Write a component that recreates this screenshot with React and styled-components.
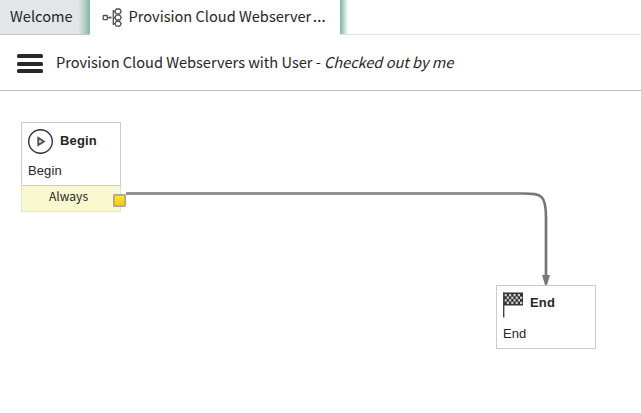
import React from "react";
import styled, { createGlobalStyle } from "styled-components";

const GlobalStyle = createGlobalStyle`
  * { box-sizing: border-box; }
  body { margin: 0; background: #fff; overflow: hidden; }
`;

const Page = styled.div`
  display: flex;
  flex-direction: column;
  width: 641px;
  height: 413px;
  background: #fff;
  color: #262626;
  font-family: "Noto Sans CJK SC", "Noto Sans", sans-serif;
`;

const TabBar = styled.div`
  display: flex;
  height: 35px;
  flex: none;
`;

const Tab = styled.div`
  display: flex;
  align-items: center;
  width: ${(p) => p.$width}px;
  padding: 0 0 2px ${(p) => p.$inset}px;
  border-bottom: 1px solid ${(p) => (p.$active ? "transparent" : "#c3c7c9")};
  background: ${(p) =>
    p.$active
      ? "#fff"
      : "linear-gradient(to right, #e2e6e8 78px, #b5d3c9 84px, #80b6a3 90px)"};
  white-space: nowrap;
`;

const TabLabel = styled.span`
  font-size: 14.6px;
  line-height: 22px;
`;

const Ellipsis = styled.span`
  margin-left: 1.5px;
  font-family: "Noto Sans", sans-serif;
  font-size: 16.5px;
  line-height: 1;
`;

const TabSpace = styled.div`
  flex: 1;
  border-bottom: 1px solid #dfe3e2;
  background: linear-gradient(to right, #80b6a3 0, #a9cfc2 3px, #eef6f3 7px, #fff 10px);
`;

const WorkflowIcon = styled.svg`
  width: 20px;
  height: 19px;
  margin: 3px 7px 0 0;
  flex: none;
`;

const Header = styled.header`
  display: flex;
  align-items: center;
  height: 56px;
  flex: none;
  padding-left: 17px;
  border-bottom: 1px solid #bdbdbd;
`;

const MenuButton = styled.button`
  display: flex;
  flex-direction: column;
  gap: 3px;
  width: 26px;
  margin: 2px 13px 0 0;
  padding: 0;
  border: 0;
  background: none;
`;

const MenuBar = styled.span`
  height: 4px;
  border-radius: 1.5px;
  background: #292929;

  &:not(:first-child) { margin-top: 0.5px; }
`;

const Title = styled.h1`
  margin: 0 0 2px;
  font-size: 14.6px;
  font-weight: 400;
  line-height: 22px;
  letter-spacing: -0.02px;
  white-space: nowrap;
`;

const Status = styled.em`
  font-style: italic;
`;

const Canvas = styled.main`
  position: relative;
  flex: 1;
`;

const Connector = styled.svg`
  position: absolute;
  left: 0;
  top: 0;
`;

const Node = styled.section`
  position: absolute;
  left: ${(p) => p.$x}px;
  top: ${(p) => p.$y}px;
  width: 100px;
  font-family: "Liberation Sans", Arial, sans-serif;
`;

const NodeBody = styled.div`
  height: 64px;
  padding: 6px;
  border: 1px solid #cbcbcb;
  background: #fff;
`;

const NodeHeading = styled.div`
  display: flex;
  align-items: center;
  height: 25px;
  gap: 7px;
`;

const NodeName = styled.strong`
  font-size: 13px;
  line-height: 16px;
  padding-bottom: ${(p) => p.$lift}px;
  letter-spacing: 0.15px;
`;

const NodeText = styled.div`
  margin-top: 9px;
  font-size: 13px;
  line-height: 16px;
  letter-spacing: 0.1px;
`;

const NodeIcon = styled.svg`
  width: ${(p) => p.$width}px;
  height: 26px;
  flex: none;
`;

const Exit = styled.div`
  height: 27px;
  margin-top: -1px;
  padding-right: 5px;
  border: 1px solid #e5e4c7;
  border-top-color: #cbcbcb;
  background: #f9f8cf;
  font: 12.1px/20px "Noto Sans CJK SC", "Noto Sans", sans-serif;
  text-align: center;
`;

const Port = styled.span`
  position: absolute;
  left: 92px;
  top: 72px;
  width: 13px;
  height: 13px;
  border: 1px solid #aaa593;
  border-radius: 1px;
  box-shadow: inset 0 0 0 1px #cdb645;
  background: linear-gradient(#f9e64d, #f5d91b 55%, #edc512);
`;

const checks = Array.from({ length: 32 }, (_, i) => ({ x: i % 8, y: Math.floor(i / 8) })).filter(
  (c) => (c.x + c.y) % 2 === 0
);

export default function App() {
  return (
    <Page>
      <GlobalStyle />
      <TabBar>
        <Tab $width={90} $inset={10}>
          <TabLabel>Welcome</TabLabel>
        </Tab>
        <Tab $active $width={250} $inset={11.5}>
          <WorkflowIcon viewBox="0 0 20 19" fill="none" stroke="#505050" strokeWidth="1.3">
            <rect x="1.2" y="7.5" width="4.2" height="4.2" rx="0.8" />
            <path d="M5.500 9.600h4M11.300 2v15M11.300 3.500h2M11.300 9.600h2M11.300 15.700h2" />
            <path d="M7.500 7.600l2.500 2-2.500 2z" fill="#777" stroke="none" />
            <path d="M14.300 1h3.400l1.500 2.400-1.500 2.400h-3.400l-1.500-2.400z" />
            <path d="M14.300 7.200h3.400l1.500 2.400-1.500 2.400h-3.400l-1.500-2.400z" />
            <path d="M14.300 13.400h3.400l1.500 2.400-1.500 2.400h-3.400l-1.500-2.400z" />
          </WorkflowIcon>
          <TabLabel>
            Provision Cloud Webserver<Ellipsis>…</Ellipsis>
          </TabLabel>
        </Tab>
        <TabSpace />
      </TabBar>
      <Header>
        <MenuButton aria-label="Menu">
          <MenuBar />
          <MenuBar />
          <MenuBar />
        </MenuButton>
        <Title>
          Provision Cloud Webservers with User - <Status>Checked out by me</Status>
        </Title>
      </Header>
      <Canvas>
        <Connector width="641" height="322" viewBox="0 91 641 322">
          <path d="M126 193.500H523C542 193.500 546 195 546 218V277" fill="none" stroke="#777" strokeWidth="2.700" />
          <path d="M126 193.800H521" stroke="#a0a0a0" strokeWidth="0.700" />
          <path d="M542 275h8l-3 10h-2z" fill="#777" />
        </Connector>
        <Node $x={21} $y={31}>
          <NodeBody>
            <NodeHeading>
              <NodeIcon $width={25} viewBox="0 0 25 26" fill="none" stroke="#333">
                <circle cx="12.500" cy="12.500" r="11.800" strokeWidth="1.400" />
                <path d="M10.300 9v7l5.500-3.500z" strokeWidth="1.900" stroke="#505050" />
              </NodeIcon>
              <NodeName $lift={2}>Begin</NodeName>
            </NodeHeading>
            <NodeText>Begin</NodeText>
          </NodeBody>
          <Exit>Always</Exit>
          <Port />
        </Node>
        <Node $x={496} $y={194}>
          <NodeBody>
            <NodeHeading>
              <NodeIcon $width={20} viewBox="0 0 20 26">
                <rect x="0" y="0.500" width="20" height="13" fill="#333" />
                {checks.map((c) => (
                  <rect key={`${c.x}-${c.y}`} x={1.6 + c.x * 2.2} y={2 + c.y * 2.6} width="2.200" height="2.300" fill="#d0d0d0" />
                ))}
                <rect x="0" y="0.500" width="1.400" height="25" fill="#444" />
              </NodeIcon>
              <NodeName $lift={4}>End</NodeName>
            </NodeHeading>
            <NodeText>End</NodeText>
          </NodeBody>
        </Node>
      </Canvas>
    </Page>
  );
}
